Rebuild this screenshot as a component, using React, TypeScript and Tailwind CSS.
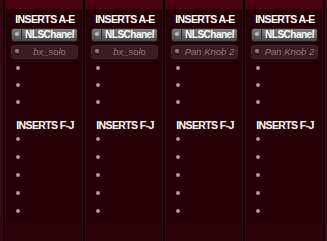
import React from "react";

const cols = [
  { second: "bx_solo" },
  { second: "bx_solo" },
  { second: "Pan Knob 2" },
  { second: "Pan Knob 2" },
];

function Dot() {
  return <div className="w-[4px] h-[4px] rounded-full bg-[#a89ca2]" />;
}

function EmptyRow({ h }: { h: string }) {
  return (
    <div className={`${h} pl-[10px] pt-[4px]`}>
      <Dot />
    </div>
  );
}

function Column({ second }: { second: string }) {
  return (
    <div className="w-[80px] h-full flex border-l-2 border-[#0a0002]">
      <div className="flex-1 flex flex-col bg-[#270007] border-l border-r border-[#36050e]">
        <div className="h-[9px] bg-[#4c0011]" />
        <div className="h-[19px] pt-[5px] pl-[2px] text-center text-white font-bold text-[10.5px] leading-[10px] tracking-[-0.6px]">
          INSERTS A-E
        </div>
        <div className="h-[17px]">
          <div className="ml-[5px] mr-[4px] h-[14px] flex rounded-[3px] bg-linear-to-b from-[#7e7e7e] to-[#4a4a4a] border border-[#222222] shadow-[0_1px_0_#140004]">
            <div className="w-[10px] pt-[3px] flex justify-center border-r border-[#2e2e2e]">
              <div className="w-[4px] h-[4px] rounded-full bg-[#b8b8b8]" />
            </div>
            <div className="flex-1 text-center text-white font-bold text-[10px] leading-[12px] tracking-[-0.5px]">
              NLSChanel
            </div>
          </div>
        </div>
        <div className="h-[17px]">
          <div className="ml-[5px] mr-[4px] h-[14px] flex rounded-[3px] bg-[#3b1c22] border border-[#45262c]">
            <div className="w-[10px] pt-[3px] flex justify-center">
              <div className="w-[4px] h-[4px] rounded-full bg-[#8e7e84]" />
            </div>
            <div className="flex-1 text-center text-[#8a787e] italic text-[9.5px] leading-[12px]">
              {second}
            </div>
          </div>
        </div>
        <EmptyRow h="h-[17px]" />
        <EmptyRow h="h-[17px]" />
        <EmptyRow h="h-[17px]" />
        <div className="h-[20px] pt-[7px] pl-[2px] text-center text-white font-bold text-[10.5px] leading-[10px] tracking-[-0.6px]">
          INSERTS F-J
        </div>
        <EmptyRow h="h-[18px]" />
        <EmptyRow h="h-[18px]" />
        <EmptyRow h="h-[18px]" />
        <EmptyRow h="h-[18px]" />
        <EmptyRow h="h-[18px]" />
        <div className="flex-1 bg-[#2c030b]" />
      </div>
    </div>
  );
}

export default function App() {
  return (
    <div
      className="w-[327px] h-[241px] flex bg-[#2a0008] overflow-hidden"
      style={{ fontFamily: '"Liberation Sans", Arial, sans-serif' }}
    >
      <div className="w-[3px] h-full bg-[#3a0510]" />
      {cols.map((c, i) => (
        <Column key={i} second={c.second} />
      ))}
      <div className="w-[2px] h-full bg-[#0a0002]" />
      <div className="flex-1 h-full bg-[#3a0510]" />
    </div>
  );
}
